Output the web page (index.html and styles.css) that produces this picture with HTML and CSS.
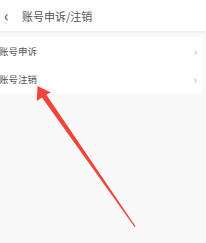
FILE: index.html
```html
<!DOCTYPE html>
<html lang="zh">
<head>
  <meta charset="UTF-8">
  <meta name="viewport" content="width=device-width, initial-scale=1.0">
  <title>账号申诉/注销</title>
  <link rel="stylesheet" href="styles.css">
</head>
<body>
  <header class="topbar">
    <span class="back">&#8249;</span>
    <span class="title">账号申诉/注销</span>
  </header>

  <main>
    <div class="list">
      <a class="row" href="#">
        <span>账号申诉</span>
        <span class="more">&#8250;</span>
      </a>
      <a class="row" href="#">
        <span>账号注销</span>
        <span class="more">&#8250;</span>
      </a>
    </div>
  </main>

  <svg class="pointer" width="206" height="243" viewBox="0 0 206 243">
    <polygon fill="#f2443a" points="37.5,86 51,92.5 46.2,94.6 135.6,226.5 134.6,227 42,97.4 36.8,101"/>
  </svg>
</body>
</html>
```

FILE: styles.css
```css
body {
  font-family: "Noto Sans CJK SC", "Noto Sans", sans-serif;
  margin: 0;
  padding: 0;
  background: #f9f9f9;
  color: #555;
  width: 206px;
  height: 243px;
  overflow: hidden;
  position: relative;
}

.topbar {
  height: 31px;
  background: white;
  border-bottom: 1px solid #ececec;
  display: flex;
  align-items: center;
  box-shadow: 0 1px 2px rgba(0, 0, 0, 0.04);
}

.back {
  font-size: 16px;
  color: #555;
  width: 22px;
  padding-left: 4px;
  box-sizing: border-box;
  line-height: 1;
  margin-top: -2px;
}

.title {
  font-size: 11px;
  color: #555;
}

main {
  padding-top: 5px;
}

.list {
  width: 202px;
  background: white;
}

.row {
  height: 28px;
  display: flex;
  justify-content: space-between;
  align-items: center;
  text-decoration: none;
  color: #555;
  font-size: 9.5px;
  margin-left: -1px;
  padding-right: 5px;
}

.more {
  font-size: 11px;
  color: #aaa;
}

.pointer {
  position: absolute;
  left: 0;
  top: 0;
}
```
